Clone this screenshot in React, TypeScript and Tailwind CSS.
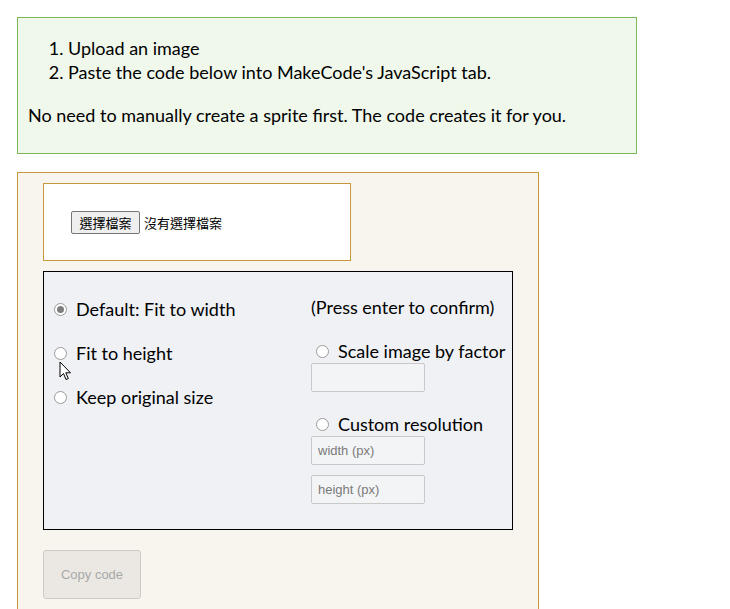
import React from "react";

const sans = { fontFamily: "Lato, 'Noto Sans CJK TC', sans-serif" };

function Radio({ checked }: { checked?: boolean }) {
  return (
    <span className="flex h-[13px] w-[13px] shrink-0 items-center justify-center rounded-full border border-[#9a9a9a] bg-white">
      {checked ? <span className="h-[7px] w-[7px] rounded-full bg-[#7d7d7d]" /> : null}
    </span>
  );
}

function Row({ label, checked }: { label: string; checked?: boolean }) {
  return (
    <div className="flex h-6 items-center gap-[9px] text-[18px] leading-6 text-black">
      <Radio checked={checked} />
      <span>{label}</span>
    </div>
  );
}

function Field({ placeholder }: { placeholder?: string }) {
  return (
    <div className="flex h-[29px] w-[114px] items-center rounded-[2px] border border-[#c8c8c8] bg-[#f3f4f6] pl-[6px] text-[13px] text-[#7a7a7a] [font-family:'Liberation_Sans',Arial,sans-serif]">
      {placeholder}
    </div>
  );
}

export default function App() {
  return (
    <div className="relative min-h-[609px] w-[730px] overflow-hidden bg-white pl-[17px] pt-[17px]" style={sans}>
      <div className="w-[620px] border border-[#7ab85a] bg-[#f0f8ec] px-[10px] pb-[26px] pt-[18px] text-[18px] leading-6 text-black">
        <ol className="list-decimal pl-[40px]">
          <li>Upload an image</li>
          <li>Paste the code below into MakeCode's JavaScript tab.</li>
        </ol>
        <p className="mt-[19px]">No need to manually create a sprite first. The code creates it for you.</p>
      </div>

      <div className="mt-[18px] h-[460px] w-[522px] border border-[#c8983f] bg-[#f8f4ee] pl-[25px] pt-[10px]">
        <div className="flex h-[78px] w-[308px] items-start border border-[#c8983f] bg-white px-[27px] pt-[27px]">
          <div className="flex items-center gap-[4px] text-[13px] text-black" style={{ fontFamily: "'Noto Sans CJK TC', sans-serif" }}>
            <span className="flex h-[23px] w-[69px] items-center justify-center rounded-[2px] border border-[#767676] bg-[#efefef] leading-none">
              選擇檔案
            </span>
            <span className="leading-none">沒有選擇檔案</span>
          </div>
        </div>

        <div className="mt-[10px] flex h-[259px] w-[470px] border border-black bg-[#eff1f5]">
          <div className="flex w-[267px] flex-col gap-5 pl-[10px] pt-[25px]">
            <Row label="Default: Fit to width" checked />
            <Row label="Fit to height" />
            <Row label="Keep original size" />
          </div>
          <div className="flex flex-col pt-[23px]">
            <div className="h-6 text-[18px] leading-6 text-black">(Press enter to confirm)</div>
            <div className="mt-5 pl-[5px]">
              <Row label="Scale image by factor" />
            </div>
            <Field />
            <div className="mt-5 pl-[5px]">
              <Row label="Custom resolution" />
            </div>
            <Field placeholder="width (px)" />
            <div className="mt-[10px]">
              <Field placeholder="height (px)" />
            </div>
          </div>
        </div>

        <div className="mt-[20px] flex h-[49px] w-[98px] items-center justify-center rounded-[3px] border border-[#cfcbc4] bg-[#ebe8e3] text-[13px] text-[#a8a8a8] [font-family:'Liberation_Sans',Arial,sans-serif]">
          Copy code
        </div>
      </div>

      <svg className="absolute left-[59px] top-[361px]" width="13" height="20" viewBox="0 0 13 20">
        <path d="M1 1 L1 16 L4.5 12.5 L7 18.5 L9.3 17.5 L6.8 11.8 L11.5 11.8 Z" fill="#ffffff" stroke="#000000" strokeWidth="1" strokeLinejoin="round" />
      </svg>
    </div>
  );
}
